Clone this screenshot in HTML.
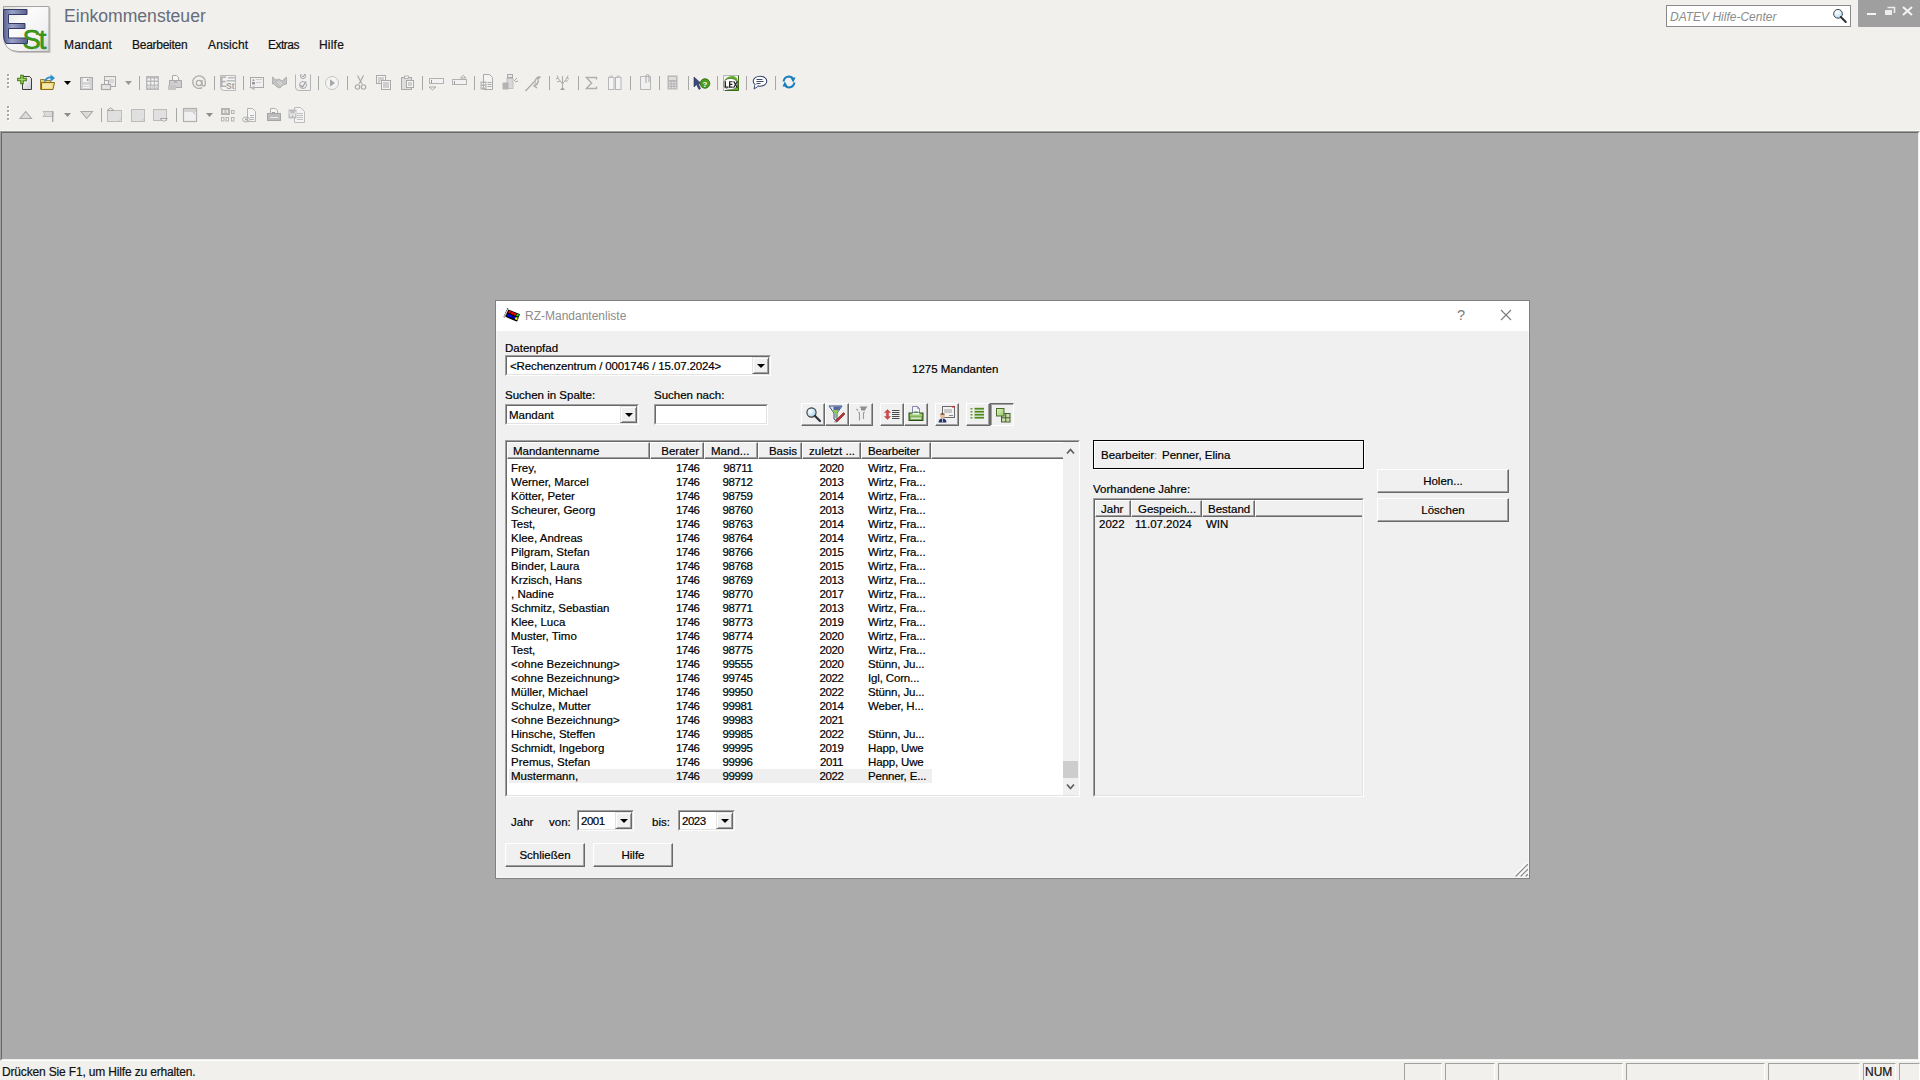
<!DOCTYPE html>
<html><head><meta charset="utf-8">
<style>
*{margin:0;padding:0;box-sizing:border-box}
html,body{width:1920px;height:1080px;overflow:hidden;background:#f1f0ec;font-family:"Liberation Sans",sans-serif;color:#000}
.a{position:absolute}
.t{position:absolute;font-size:11.5px;line-height:14px;white-space:pre;-webkit-text-stroke:0.2px currentColor}
.ns{-webkit-text-stroke:0}
.r{text-align:right}
.c{text-align:center}
.sep{position:absolute;width:1px;height:14px;background:#a7a7a7}
.grip{position:absolute;width:2px;height:2px;background:#a9a9a9;box-shadow:1px 1px 0 #fff}
.btn{position:absolute;background:#f0f0f0;border-top:1px solid #fff;border-left:1px solid #fff;border-right:1px solid #696969;border-bottom:1px solid #696969;box-shadow:inset -1px -1px 0 #a0a0a0}
.sunk{position:absolute;border-top:1px solid #a0a0a0;border-left:1px solid #a0a0a0;border-right:1px solid #fff;border-bottom:1px solid #fff}
.sunk>.in{position:absolute;left:0;top:0;right:0;bottom:0;border-top:1px solid #696969;border-left:1px solid #696969;border-right:1px solid #e3e3e3;border-bottom:1px solid #e3e3e3;background:#fff}
.hd{position:absolute;top:0;height:17px;background:#f0f0f0;border-top:1px solid #fff;border-left:1px solid #fff;border-right:1px solid #696969;border-bottom:1px solid #696969;box-shadow:inset -1px -1px 0 #a0a0a0}
.ddb{position:absolute;background:#f0f0f0;border-top:1px solid #e3e3e3;border-left:1px solid #e3e3e3;border-right:1px solid #696969;border-bottom:1px solid #696969;box-shadow:inset 1px 1px 0 #fff,inset -1px -1px 0 #a0a0a0}
.ddb:after{content:"";position:absolute;left:4px;top:6px;border-left:4px solid transparent;border-right:4px solid transparent;border-top:4px solid #000}
.ico{position:absolute;width:16px;height:16px}
</style></head><body>

<!-- ===== APP HEADER ===== -->
<div id="hdr">
 <!-- logo -->
 <svg class="a" style="left:0;top:0" width="56" height="56" viewBox="0 0 56 56">
  <defs>
   <linearGradient id="lg1" x1="0" y1="0" x2="1" y2="1"><stop offset="0" stop-color="#dcdcdc"/><stop offset=".35" stop-color="#fbfbfb"/><stop offset=".7" stop-color="#f2f2f4"/><stop offset="1" stop-color="#d4d4d8"/></linearGradient>
   <linearGradient id="lg2" x1="0" y1="0" x2="1" y2="0"><stop offset="0" stop-color="#5a6090"/><stop offset=".35" stop-color="#9aa2c8"/><stop offset=".7" stop-color="#7880a8"/><stop offset="1" stop-color="#5a6088"/></linearGradient>
  </defs>
  <path d="M4 52.5H49.5V7H3.5V35Q4 52 18 52.5" fill="#707070" opacity=".35" transform="translate(1,0.5)"/>
  <path d="M3.5 6.5H49V51.5H18Q3.5 51 3.5 36Z" fill="url(#lg1)" stroke="#a4a4a4" stroke-width="1"/>
  <path d="M3.5 9.5H27V14.5H8.5V23.5H25V28.5H8.5V38H27.5V43.5H6Q3.5 40 3.5 35Z" fill="url(#lg2)" stroke="#343a68" stroke-width="1"/>
  <text x="22.5" y="49" font-family="Liberation Sans" font-size="27.5" fill="#3c9c14" stroke="#2a7a08" stroke-width=".5" letter-spacing="-2.2">St</text>
 </svg>
 <div class="t ns" style="left:64px;top:5px;font-size:17.6px;line-height:22px;color:#666c7a">Einkommensteuer</div>
 <div class="t" style="left:64px;top:38px;font-size:12px;letter-spacing:0.19px;color:#111">Mandant</div>
 <div class="t" style="left:132px;top:38px;font-size:12px;letter-spacing:-0.27px;color:#111">Bearbeiten</div>
 <div class="t" style="left:208px;top:38px;font-size:12px;letter-spacing:0.13px;color:#111">Ansicht</div>
 <div class="t" style="left:268px;top:38px;font-size:12px;letter-spacing:-0.5px;color:#111">Extras</div>
 <div class="t" style="left:319px;top:38px;font-size:12px;letter-spacing:0.2px;color:#111">Hilfe</div>

 <!-- search -->
 <div class="a" style="left:1666px;top:5px;width:185px;height:22px;background:#fff;border:1px solid #8a8a8a"></div>
 <div class="t ns" style="left:1670px;top:10px;font-size:12px;font-style:italic;color:#8c8c8c">DATEV Hilfe-Center</div>
 <svg class="a" style="left:1832px;top:8px" width="17" height="17" viewBox="0 0 17 17">
  <defs><radialGradient id="smg" cx=".4" cy=".35" r=".7"><stop offset="0" stop-color="#fff"/><stop offset="1" stop-color="#b4dcf0"/></radialGradient></defs>
  <circle cx="6" cy="5.8" r="4.4" fill="url(#smg)" stroke="#3c4650" stroke-width="1"/>
  <path d="M8.8 9L13.8 14" stroke="#2e3338" stroke-width="2" stroke-linecap="round"/>
 </svg>
 <!-- window controls -->
 <div class="a" style="left:1858px;top:0;width:62px;height:27px;background:#9e9f9e;border-bottom-left-radius:1px"></div>
 <div class="a" style="left:1867px;top:13px;width:9px;height:2px;background:#f4f4f4"></div>
 <svg class="a" style="left:1884px;top:6px" width="12" height="10" viewBox="0 0 12 10">
  <path d="M3.5 1.5H10.5V7" fill="none" stroke="#ececec" stroke-width="1.6"/>
  <rect x="1" y="4" width="7" height="5" fill="#ececec"/>
 </svg>
 <svg class="a" style="left:1902px;top:6px" width="11" height="10" viewBox="0 0 11 10">
  <path d="M1 1L10 9M10 1L1 9" stroke="#f4f4f4" stroke-width="2"/>
 </svg>
</div>

<!-- ===== TOOLBARS ===== -->
<!--TB-START-->
<div class="grip" style="left:7px;top:74px"></div>
<div class="grip" style="left:7px;top:78px"></div>
<div class="grip" style="left:7px;top:82px"></div>
<div class="grip" style="left:7px;top:86px"></div>
<div class="grip" style="left:7px;top:106px"></div>
<div class="grip" style="left:7px;top:110px"></div>
<div class="grip" style="left:7px;top:114px"></div>
<div class="grip" style="left:7px;top:118px"></div>
<div class="sep" style="left:139px;top:76px"></div>
<div class="sep" style="left:214px;top:76px"></div>
<div class="sep" style="left:243px;top:76px"></div>
<div class="sep" style="left:318px;top:76px"></div>
<div class="sep" style="left:347px;top:76px"></div>
<div class="sep" style="left:422px;top:76px"></div>
<div class="sep" style="left:474px;top:76px"></div>
<div class="sep" style="left:549px;top:76px"></div>
<div class="sep" style="left:578px;top:76px"></div>
<div class="sep" style="left:630px;top:76px"></div>
<div class="sep" style="left:659px;top:76px"></div>
<div class="sep" style="left:688px;top:76px"></div>
<div class="sep" style="left:717px;top:76px"></div>
<div class="sep" style="left:746px;top:76px"></div>
<div class="sep" style="left:775px;top:76px"></div>
<div class="sep" style="left:101px;top:108px"></div>
<div class="sep" style="left:176px;top:108px"></div>
<svg class="a" style="left:17px;top:74px" width="17" height="17" viewBox="0 0 17 17"><defs><linearGradient id="nd" x1="0" y1="0" x2="1" y2="1"><stop offset="0" stop-color="#fff"/><stop offset="1" stop-color="#c8c8d4"/></linearGradient></defs>
<path d="M5.5 2.5H12.5L14.5 4.5V15.5H5.5Z" fill="url(#nd)" stroke="#3c3c3c" stroke-width="1"/>
<path d="M3.8 1.2h2.4v3.1h3.1v2.4h-3.1v3.1h-2.4v-3.1h-3.1v-2.4h3.1z" fill="#a6d86a" stroke="#3f7a10" stroke-width="1.1"/></svg>
<svg class="a" style="left:39px;top:74px" width="18" height="17" viewBox="0 0 18 17"><path d="M1.5 5.5h4l1 1h5v9h-10z" fill="#f0d070" stroke="#9a7a30"/>
<path d="M2.5 8.5h13l-1.5 7h-11.5z" fill="#f2dc80" stroke="#8a6a20"/><rect x="4" y="10" width="8.5" height="4" fill="#f4e8b0"/>
<path d="M5.5 7.5Q8 2.5 12.5 3.5" stroke="#2a8fd0" stroke-width="1.8" fill="none"/><path d="M11.5 0.5L16 4L11.5 8z" fill="#2a8fd0"/></svg>
<svg class="a" style="left:64px;top:81px" width="7" height="4" viewBox="0 0 7 4"><path d="M0 0H7L3.5 4z" fill="#000"/></svg>
<svg class="a" style="left:79px;top:76px" width="15" height="15" viewBox="0 0 15 15"><rect x="1.5" y="1.5" width="12" height="12" fill="#d4d4d4" stroke="#a9a9a9"/>
<rect x="4" y="2" width="6" height="4" fill="#f4f4f4"/><rect x="8" y="3" width="1.5" height="2" fill="#9a9a9a"/>
<rect x="4" y="9" width="7" height="1" fill="#f4f4f4"/><rect x="4" y="11" width="7" height="1" fill="#f4f4f4"/></svg>
<svg class="a" style="left:100px;top:75px" width="17" height="16" viewBox="0 0 17 16"><rect x="4.5" y="1.5" width="11" height="10" fill="#ececec" stroke="#a9a9a9"/>
<rect x="9" y="4" width="5" height="4" fill="#d8d8d8"/>
<rect x="4.5" y="5.5" width="4" height="5" fill="#f4f4f4" stroke="#a9a9a9"/>
<rect x="1.5" y="9.5" width="9" height="5" fill="#e4e4e4" stroke="#a9a9a9" stroke-width="1.2"/></svg>
<svg class="a" style="left:125px;top:81px" width="7" height="4" viewBox="0 0 7 4"><path d="M0 0H7L3.5 4z" fill="#9a9a9a"/></svg>
<svg class="a" style="left:145px;top:75px" width="15" height="16" viewBox="0 0 15 16"><rect x="1" y="1" width="13" height="14" fill="#bababa"/>
<g fill="#f6f6f6"><rect x="2.5" y="3.5" width="2.5" height="2"/><rect x="6.3" y="3.5" width="2.5" height="2"/><rect x="10" y="3.5" width="2.5" height="2"/>
<rect x="2.5" y="7" width="2.5" height="2.5"/><rect x="6.3" y="7" width="2.5" height="2.5"/><rect x="10" y="7" width="2.5" height="2.5"/></g>
<g fill="none" stroke="#f0f0f0" stroke-width=".8"><circle cx="3.8" cy="12" r="1.1"/><circle cx="7.5" cy="12" r="1.1"/><circle cx="11.2" cy="12" r="1.1"/></g></svg>
<svg class="a" style="left:167px;top:74px" width="17" height="17" viewBox="0 0 17 17"><path d="M5.5 1.5h4l2 2v5h-6z" fill="#f6f6f6" stroke="#a9a9a9"/>
<rect x="2.5" y="6.5" width="12" height="7" fill="#cfcfcf" stroke="#a9a9a9"/>
<rect x="1" y="11" width="8" height="5" fill="#c6c6c6"/><rect x="7" y="7.5" width="3" height="1" fill="#9a9a9a"/></svg>
<svg class="a" style="left:191px;top:75px" width="16" height="16" viewBox="0 0 16 16"><path d="M11.2 12.6A6.3 6.3 0 1 1 14.3 8V9Q14.3 11 12.6 11Q11 11 11 9V5" fill="none" stroke="#acacac" stroke-width="1.3"/>
<circle cx="8" cy="8" r="2.7" fill="none" stroke="#acacac" stroke-width="1.3"/></svg>
<svg class="a" style="left:219px;top:74px" width="18" height="18" viewBox="0 0 18 18"><path d="M1.5 1.5H16.5V16.5H5Q1.5 16.5 1.5 13Z" fill="#f2f2f2" stroke="#b8b8b8"/>
<path d="M2 2.5h5v1.6h-3.5v2.7h3v1.6h-3v3h4v1.6H2z" fill="#b0b0b0"/>
<rect x="9" y="3" width="7" height="1.5" fill="#bdbdbd"/><rect x="7.5" y="6" width="8.5" height="1.5" fill="#bdbdbd"/>
<text x="7" y="15.2" font-family="Liberation Sans" font-size="8.5" font-weight="bold" fill="#a0a0a0">St</text></svg>
<svg class="a" style="left:248px;top:76px" width="17" height="15" viewBox="0 0 17 15"><rect x="2.5" y="1.5" width="13" height="10" fill="#f0f0f0" stroke="#a9a9a9"/>
<circle cx="5.5" cy="4.2" r="1" fill="#9a9a9a"/><rect x="4" y="6" width="3" height="2.5" fill="#9a9a9a"/>
<rect x="8" y="3" width="6" height="1" fill="#cfcfcf"/><rect x="8" y="6" width="5" height="1" fill="#cfcfcf"/>
<path d="M0.5 11.5h3l3-2v5l-3-2" fill="#b8b8b8"/></svg>
<svg class="a" style="left:272px;top:76px" width="15" height="13" viewBox="0 0 15 13"><path d="M0.5 1L4 4L7 3L10 5L11 4L14.5 1V8L11 9L8 12L5 11L2 8L0.5 8z" fill="#c2c2c2" stroke="#a8a8a8" stroke-width=".8"/>
<path d="M5 6L9 9M7 5L10 8" stroke="#e8e8e8" stroke-width=".8"/></svg>
<svg class="a" style="left:294px;top:74px" width="18" height="18" viewBox="0 0 18 18"><path d="M1.5 0.5V13Q1.5 16.5 5 16.5H16.5V0.5" fill="#f0f0f0" stroke="#b4b4b4"/>
<circle cx="9" cy="2" r="2.6" fill="none" stroke="#a8a8a8"/><path d="M7.5 1.5L9 3L11 0" stroke="#a0a0a0" fill="none"/>
<circle cx="9" cy="11" r="3.5" fill="none" stroke="#a8a8a8"/><path d="M6.5 11L8.5 13L12 7.5" stroke="#a0a0a0" stroke-width="1.2" fill="none"/></svg>
<svg class="a" style="left:324px;top:75px" width="16" height="16" viewBox="0 0 16 16"><circle cx="8" cy="8" r="6.5" fill="#f4f4f4" stroke="#c4c4c4"/>
<path d="M6 4.2V11.8L11 8z" fill="#a8a8a8"/></svg>
<svg class="a" style="left:354px;top:74px" width="13" height="17" viewBox="0 0 13 17"><path d="M3.5 1.5L8 10M9.5 1.5L5 10" stroke="#a6a6a6" stroke-width="1.1" fill="none"/>
<circle cx="3.5" cy="13" r="2.2" fill="none" stroke="#a8a8a8" stroke-width="1.1"/><circle cx="9.5" cy="13" r="2.2" fill="none" stroke="#a8a8a8" stroke-width="1.1"/></svg>
<svg class="a" style="left:375px;top:74px" width="17" height="17" viewBox="0 0 17 17"><rect x="1.5" y="1.5" width="9" height="8" fill="#f4f4f4" stroke="#a9a9a9"/>
<g fill="#a9a9a9"><rect x="3" y="3.5" width="6" height="1"/><rect x="3" y="5.5" width="6" height="1"/><rect x="3" y="7.5" width="2" height="1"/></g>
<rect x="6.5" y="6.5" width="9" height="9" fill="#f4f4f4" stroke="#a9a9a9"/>
<g fill="#a9a9a9"><rect x="8" y="8.5" width="6" height="1"/><rect x="8" y="10.5" width="6" height="1"/><rect x="8" y="12.5" width="6" height="1"/></g></svg>
<svg class="a" style="left:400px;top:75px" width="16" height="16" viewBox="0 0 16 16"><rect x="1.5" y="2.5" width="10" height="12" fill="#dedede" stroke="#a9a9a9"/>
<rect x="4.5" y="1" width="4" height="2.5" fill="#f2f2f2" stroke="#a9a9a9" stroke-width=".8"/>
<rect x="6.5" y="5.5" width="7" height="7" fill="#f4f4f4" stroke="#a9a9a9"/>
<g fill="#a9a9a9"><rect x="8" y="7.5" width="4" height="1"/><rect x="8" y="9.5" width="4" height="1"/></g></svg>
<svg class="a" style="left:428px;top:77px" width="17" height="15" viewBox="0 0 17 15"><rect x="1.5" y="1.5" width="14" height="5" fill="#f2f2f2" stroke="#b2b2b2"/><rect x="3" y="3" width="1" height="3" fill="#9a9a9a"/>
<path d="M1 10H8L4.5 13z" fill="none" stroke="#aaa" stroke-width="1"/></svg>
<svg class="a" style="left:451px;top:74px" width="17" height="13" viewBox="0 0 17 13"><path d="M9.5 4H15L12.25 1.3z" fill="none" stroke="#aaa"/>
<rect x="1.5" y="5.5" width="14" height="5" fill="#f2f2f2" stroke="#b2b2b2"/><rect x="3" y="7" width="1" height="3" fill="#9a9a9a"/></svg>
<svg class="a" style="left:480px;top:74px" width="15" height="17" viewBox="0 0 15 17"><path d="M3.5 0.5h6l3 3v12h-9z" fill="#f4f4f4" stroke="#a9a9a9"/>
<rect x="0.5" y="7.5" width="6" height="8" fill="#b4b4b4"/><g fill="#f0f0f0"><rect x="1.5" y="9" width="1.5" height="1.5"/><rect x="4" y="9" width="1.5" height="1.5"/><rect x="1.5" y="12" width="1.5" height="1.5"/><rect x="4" y="12" width="1.5" height="1.5"/></g>
<g fill="#a9a9a9"><rect x="7.5" y="8" width="4" height="1"/><rect x="7.5" y="10" width="4" height="1"/><rect x="7.5" y="12" width="4" height="1"/></g></svg>
<svg class="a" style="left:502px;top:74px" width="17" height="17" viewBox="0 0 17 17"><rect x="5.5" y="0.5" width="5" height="3" fill="#e8e8e8" stroke="#a9a9a9"/>
<rect x="5" y="4.5" width="6" height="10" fill="#d8d8d8" stroke="#b8b8b8" stroke-width=".8"/>
<rect x="0.5" y="8.5" width="6" height="7" fill="#b4b4b4"/>
<path d="M12 7l3-3M13 8l3-1" stroke="#a9a9a9" stroke-width="1"/></svg>
<svg class="a" style="left:525px;top:75px" width="17" height="17" viewBox="0 0 17 17"><path d="M0.5 16L10 6Q12 1 15 2L13 4Q14 9 9 11L12 13" stroke="#a6a6a6" stroke-width="1.2" fill="none"/>
<path d="M10 6Q11 9 9 11" stroke="#b8b8b8" fill="none"/></svg>
<svg class="a" style="left:554px;top:74px" width="17" height="17" viewBox="0 0 17 17"><path d="M8.5 15V8M8.5 10L4 4M8.5 10L13 4M8.5 8L8.5 2M4 4L2 5M4 4L3 1.5M13 4L15 5M13 4L14 1.5M6 7L3 8M11 7L14 7" stroke="#ababab" stroke-width="1" fill="none"/>
<path d="M6 16h5l-1.5-2h-2z" fill="#a4a4a4"/></svg>
<svg class="a" style="left:585px;top:76px" width="13" height="14" viewBox="0 0 13 14"><path d="M11.5 3.5V1.5H1.5L6.5 7L1.5 12.5H11.5V10.5" fill="none" stroke="#aeaeae" stroke-width="1.4"/><path d="M3.5 2.5L8 7L3.5 11.5" fill="none" stroke="#e0e0e0" stroke-width=".6"/></svg>
<svg class="a" style="left:607px;top:75px" width="16" height="16" viewBox="0 0 16 16"><rect x="1.5" y="2.5" width="5.5" height="12" fill="#f4f4f4" stroke="#b6b6b6"/>
<rect x="8.5" y="2.5" width="5.5" height="12" fill="#f4f4f4" stroke="#b6b6b6"/>
<rect x="2.5" y="0.5" width="3.5" height="2" fill="#c8c8c8"/><rect x="9.5" y="0.5" width="3.5" height="2" fill="#c8c8c8"/></svg>
<svg class="a" style="left:639px;top:74px" width="13" height="17" viewBox="0 0 13 17"><path d="M1.5 2.5H11.5V15.5H1.5Z" fill="#f0f0f0" stroke="#b6b6b6"/>
<path d="M7 9V2Q7 0.5 8.5 0.5Q10 0.5 10 2V8" stroke="#a8a8a8" stroke-width="1" fill="none"/></svg>
<svg class="a" style="left:667px;top:75px" width="12" height="16" viewBox="0 0 12 16"><rect x="0.5" y="0.5" width="10" height="14" fill="#b8b8b8"/><rect x="2" y="2" width="7" height="3" fill="#dedede"/>
<g fill="#e6e6e6"><rect x="2" y="7" width="1.5" height="1.2"/><rect x="4.8" y="7" width="1.5" height="1.2"/><rect x="7.5" y="7" width="1.5" height="1.2"/>
<rect x="2" y="9.5" width="1.5" height="1.2"/><rect x="4.8" y="9.5" width="1.5" height="1.2"/><rect x="7.5" y="9.5" width="1.5" height="1.2"/>
<rect x="2" y="12" width="1.5" height="1.2"/><rect x="4.8" y="12" width="1.5" height="1.2"/><rect x="7.5" y="12" width="1.5" height="1.2"/></g></svg>
<svg class="a" style="left:693px;top:76px" width="18" height="15" viewBox="0 0 18 15"><path d="M1 1L1 11L3.5 8.5L6 13.5L7.5 12.5L5.3 7.8H8.5Z" fill="#3c477a" stroke="#2a3360" stroke-width=".6"/>
<circle cx="12" cy="7.5" r="4.8" fill="#4d9a22" stroke="#2e6a10" stroke-width=".8"/>
<text x="12" y="10.5" text-anchor="middle" font-family="Liberation Sans" font-size="8" font-weight="bold" fill="#fff">?</text></svg>
<svg class="a" style="left:722px;top:74px" width="18" height="18" viewBox="0 0 18 18"><rect x="1.5" y="1.5" width="15" height="15" fill="#f2f2f2" stroke="#b8b8b8" stroke-width="1"/><path d="M16.5 1.5V16.5H3" stroke="#3a6a18" stroke-width="1" fill="none"/>
<path d="M2.5 6Q6 1.8 11 2Q16 3 16 9V16H9" fill="#62b028"/>
<ellipse cx="8.5" cy="10" rx="7.2" ry="5.6" fill="#fff" stroke="#3a3a3a" stroke-width=".5"/>
<path d="M2.6 7.2h1.4v5.4h2.6v1.2H2.6z M7 7.2h3.6v1.1H8.3v1.5h2.1v1.1H8.3v1.6h2.4v1.2H7z M11 7.2h1.5l1.1 2 1.1-2h1.3l-1.7 3.2 1.8 3.4h-1.5l-1.1-2.2-1.2 2.2h-1.4l1.9-3.3z" fill="#222"/></svg>
<svg class="a" style="left:752px;top:75px" width="16" height="15" viewBox="0 0 16 15"><ellipse cx="8" cy="6.2" rx="6.8" ry="5" fill="#fff" stroke="#3b4a72" stroke-width="1.1"/>
<path d="M3 10L2 14L6.5 11" fill="#fff" stroke="#3b4a72" stroke-width="1"/><path d="M3.2 10.2L5.5 10.8" stroke="#fff" stroke-width="1.4"/>
<g fill="#3b4a72"><rect x="4.5" y="4" width="6" height="1"/><rect x="4.5" y="6" width="7" height="1"/><rect x="4.5" y="8" width="4" height="1"/></g></svg>
<svg class="a" style="left:782px;top:75px" width="14" height="14" viewBox="0 0 14 14"><path d="M1.5 6.5Q2.5 1.8 7 1.6Q9.3 1.6 10.5 3" stroke="#1a7fc0" stroke-width="2" fill="none"/><path d="M8.2 2.2L13.5 2.4L11.2 7.6z" fill="#1a7fc0"/>
<path d="M12.5 7.5Q11.5 12.2 7 12.4Q4.7 12.4 3.5 11" stroke="#1a7fc0" stroke-width="2" fill="none"/><path d="M5.8 11.8L0.5 11.6L2.8 6.4z" fill="#1a7fc0"/></svg>
<svg class="a" style="left:19px;top:110px" width="14" height="10" viewBox="0 0 14 10"><path d="M1 8.5H12.5L6.75 1.5z" fill="#dcdcdc" stroke="#a8a8a8" stroke-width="1.1"/></svg>
<svg class="a" style="left:42px;top:110px" width="14" height="14" viewBox="0 0 14 14"><path d="M1 1.5H10L11 2.5V6.5H1L3 4z" fill="#dadada" stroke="#b0b0b0" stroke-width=".8"/><rect x="10" y="1" width="1.4" height="11" fill="#a8a8a8"/></svg>
<svg class="a" style="left:64px;top:113px" width="7" height="4" viewBox="0 0 7 4"><path d="M0 0H7L3.5 4z" fill="#8e8e8e"/></svg>
<svg class="a" style="left:80px;top:110px" width="14" height="10" viewBox="0 0 14 10"><path d="M1 1.5H12.5L6.75 8.5z" fill="#dcdcdc" stroke="#a8a8a8" stroke-width="1.1"/></svg>
<svg class="a" style="left:106px;top:107px" width="17" height="16" viewBox="0 0 17 16"><rect x="1.5" y="3.5" width="14" height="11" fill="#e0e0e0" stroke="#bcbcbc"/><path d="M1 3.5H8L4.5 0.8z" fill="#e6e6e6" stroke="#a8a8a8"/><path d="M12 14.5L15.5 11" stroke="#c8c8c8"/></svg>
<svg class="a" style="left:130px;top:108px" width="16" height="15" viewBox="0 0 16 15"><rect x="1.5" y="1.5" width="13" height="12" fill="#e0e0e0" stroke="#bcbcbc"/><path d="M11 13.5L14.5 10" stroke="#c8c8c8"/></svg>
<svg class="a" style="left:152px;top:108px" width="18" height="15" viewBox="0 0 18 15"><rect x="1.5" y="1.5" width="13" height="11" fill="#e0e0e0" stroke="#bcbcbc"/><path d="M8 10.5H15.5L11.75 13.5z" fill="#f0f0f0" stroke="#a8a8a8"/></svg>
<svg class="a" style="left:182px;top:107px" width="16" height="16" viewBox="0 0 16 16"><rect x="1.5" y="1.5" width="13" height="13" fill="#f0f0f0" stroke="#b0b0b0" stroke-width="1.2"/><rect x="2" y="2" width="12" height="3" fill="#d2d2d2"/><path d="M11 5L13 7" stroke="#b0b0b0"/></svg>
<svg class="a" style="left:206px;top:113px" width="7" height="4" viewBox="0 0 7 4"><path d="M0 0H7L3.5 4z" fill="#8e8e8e"/></svg>
<svg class="a" style="left:220px;top:107px" width="16" height="16" viewBox="0 0 16 16"><g fill="none" stroke="#b4b4b4"><rect x="1.5" y="1.5" width="8" height="6"/><rect x="2.5" y="2.5" width="2.5" height="4"/><rect x="6" y="2.5" width="2.5" height="4"/><rect x="11.5" y="3.5" width="2.5" height="3"/>
<rect x="1.5" y="10.5" width="2.5" height="3.5"/><rect x="6" y="10.5" width="2.5" height="3.5"/><rect x="11.5" y="10.5" width="2.5" height="3.5"/></g></svg>
<svg class="a" style="left:242px;top:107px" width="16" height="16" viewBox="0 0 16 16"><path d="M5.5 1.5h5l3 3v10h-8z" fill="#f4f4f4" stroke="#b4b4b4"/><g fill="#b4b4b4"><rect x="8" y="8" width="4" height="1"/><rect x="8" y="10" width="4" height="1"/><rect x="8" y="12" width="4" height="1"/></g>
<ellipse cx="4" cy="12.5" rx="3.5" ry="2.5" fill="none" stroke="#b0b0b0"/><circle cx="4" cy="12.5" r="1" fill="#a0a0a0"/></svg>
<svg class="a" style="left:266px;top:107px" width="16" height="16" viewBox="0 0 16 16"><path d="M4.5 1.5h5l2 2v4h-7z" fill="#f4f4f4" stroke="#b0b0b0"/><rect x="1.5" y="6.5" width="13" height="7" fill="#bdbdbd" stroke="#a6a6a6"/><rect x="4" y="10" width="8" height="1" fill="#eaeaea"/><rect x="6" y="5" width="3" height="1" fill="#a0a0a0"/></svg>
<svg class="a" style="left:288px;top:106px" width="18" height="18" viewBox="0 0 18 18"><path d="M6.5 1.5h6l4 4v11h-10z" fill="#f4f4f4" stroke="#bcbcbc"/><g fill="#c0c0c0"><rect x="9" y="7" width="6" height="1"/><rect x="9" y="9" width="6" height="1"/><rect x="9" y="11" width="6" height="1"/><rect x="9" y="13" width="6" height="1"/></g>
<rect x="0.5" y="3.5" width="8" height="9" fill="#bdbdbd"/><path d="M1.6 5.5L2.8 10.5L4.5 7L6.2 10.5L7.4 5.5" fill="none" stroke="#f4f4f4" stroke-width="1"/></svg>
<!--TB-END-->

<!-- ===== MDI CLIENT ===== -->
<div class="a" style="left:0;top:130px;width:1920px;height:1px;background:#f8f7f4"></div>
<div class="a" style="left:0;top:131px;width:1920px;height:930px;background:#ababab;border-top:1px solid #a0a0a0;border-left:1px solid #a0a0a0;border-right:1px solid #fff;border-bottom:1px solid #fff">
 <div class="a" style="left:0;top:0;right:0;bottom:0;border-top:1px solid #696969;border-left:1px solid #696969;border-right:1px solid #efefef;border-bottom:1px solid #efefef"></div>
</div>

<!-- ===== STATUS BAR ===== -->
<div class="t" style="left:2px;top:1065px;font-size:12px;letter-spacing:-0.16px;color:#111">Drücken Sie F1, um Hilfe zu erhalten.</div>
<div id="sb">
<div class="a" style="left:1404px;top:1063px;width:38px;height:17px;border-top:1px solid #a0a0a0;border-left:1px solid #a0a0a0;border-right:1px solid #fff"></div>
<div class="a" style="left:1445px;top:1063px;width:50px;height:17px;border-top:1px solid #a0a0a0;border-left:1px solid #a0a0a0;border-right:1px solid #fff"></div>
<div class="a" style="left:1498px;top:1063px;width:125px;height:17px;border-top:1px solid #a0a0a0;border-left:1px solid #a0a0a0;border-right:1px solid #fff"></div>
<div class="a" style="left:1626px;top:1063px;width:139px;height:17px;border-top:1px solid #a0a0a0;border-left:1px solid #a0a0a0;border-right:1px solid #fff"></div>
<div class="a" style="left:1768px;top:1063px;width:92px;height:17px;border-top:1px solid #a0a0a0;border-left:1px solid #a0a0a0;border-right:1px solid #fff"></div>
<div class="a" style="left:1863px;top:1063px;width:33px;height:17px;border-top:1px solid #a0a0a0;border-left:1px solid #a0a0a0;border-right:1px solid #fff"></div>
<div class="a" style="left:1899px;top:1063px;width:21px;height:17px;border-top:1px solid #a0a0a0;border-left:1px solid #a0a0a0;border-right:1px solid #fff"></div>
<div class="t" style="left:1865px;top:1065px;font-size:12px;color:#111">NUM</div>
</div>

<!-- ===== DIALOG ===== -->
<div id="dlg" class="a" style="left:495px;top:300px;width:1035px;height:579px;background:#f0f0f0;border:1px solid #808080;box-shadow:inset 1px 1px 0 #f6f6f6,inset -1px -1px 0 #f8f8f8"></div>
<!-- dialog title -->
<div class="a" style="left:496px;top:301px;width:1033px;height:30px;background:#fff"></div>
<svg class="a" style="left:503px;top:306px" width="18" height="18" viewBox="0 0 18 18">
<g transform="rotate(22 9 9)">
<path d="M3.5 5.2h12.2l.8 1-.8 1 .8 1-.8 1 .8 1-.8 1 .8 1-.8 1H3.5z" fill="#000"/>
<rect x="4.6" y="6" width="2.2" height="2.3" fill="#f00"/><rect x="7.4" y="6" width="2.4" height="2.3" fill="#f00"/><rect x="10.4" y="6" width="2.4" height="2.3" fill="#f00"/><rect x="13.2" y="6" width="2.2" height="2.3" fill="#0d0"/>
<rect x="4.6" y="9.4" width="2.2" height="2.4" fill="#00f"/><rect x="7.4" y="9.4" width="2.4" height="2.4" fill="#00f"/><rect x="10.4" y="9.4" width="2.4" height="2.4" fill="#00f"/><rect x="13.2" y="9.4" width="2.2" height="2.4" fill="#ff0"/>
<path d="M2.5 4.5v9.5" stroke="#000" stroke-width="1.4" stroke-dasharray="1.2 1"/><path d="M2.5 5.5v9" stroke="#fff" stroke-width="1" stroke-dasharray="1 1.2" opacity=".8"/>
</g></svg>
<div class="t ns" style="left:525px;top:309px;font-size:12px;color:#8c8c8c">RZ-Mandantenliste</div>
<div class="t ns" style="left:1457px;top:308px;font-size:14.5px;color:#7c7c7c">?</div>
<svg class="a" style="left:1500px;top:309px" width="12" height="12" viewBox="0 0 12 12"><path d="M1 1L11 11M11 1L1 11" stroke="#7a7a7a" stroke-width="1.1"/></svg>
<!-- controls -->
<div class="t" style="left:505px;top:341px">Datenpfad</div>
<div class="sunk" style="left:505px;top:355px;width:266px;height:21px"><div class="in"></div></div><div class="ddb" style="left:752px;top:357px;width:17px;height:17px"></div><div class="t" style="left:510px;top:359px;letter-spacing:-0.13px">&lt;Rechenzentrum / 0001746 / 15.07.2024&gt;</div>
<div class="t" style="left:912px;top:362px">1275 Mandanten</div>
<div class="t" style="left:505px;top:388px">Suchen in Spalte:</div>
<div class="sunk" style="left:505px;top:404px;width:134px;height:21px"><div class="in"></div></div><div class="ddb" style="left:620px;top:406px;width:17px;height:17px"></div><div class="t" style="left:509px;top:408px">Mandant</div>
<div class="t" style="left:654px;top:388px">Suchen nach:</div>
<div class="sunk" style="left:654px;top:404px;width:114px;height:21px"><div class="in"></div></div>
<div class="btn" style="left:801px;top:403px;width:24px;height:23px"></div>
<div class="btn" style="left:825px;top:403px;width:24px;height:23px"></div>
<div class="btn" style="left:849px;top:403px;width:24px;height:23px"></div>
<div class="btn" style="left:880px;top:403px;width:24px;height:23px"></div>
<div class="btn" style="left:904px;top:403px;width:24px;height:23px"></div>
<div class="btn" style="left:935px;top:403px;width:24px;height:23px"></div>
<div class="btn" style="left:966px;top:403px;width:24px;height:23px"></div>
<div class="a" style="left:990px;top:403px;width:24px;height:23px;background:#f0f0f0;border-top:1px solid #696969;border-left:1px solid #696969;border-right:1px solid #fff;border-bottom:1px solid #fff;box-shadow:inset 1px 1px 0 #a0a0a0"></div>
<div id="dlgicons">
<svg class="a" style="left:805px;top:406px" width="17" height="17" viewBox="0 0 17 17"><defs><radialGradient id="mg" cx=".4" cy=".4" r=".6"><stop offset="0" stop-color="#fff"/><stop offset="1" stop-color="#a8d4ee"/></radialGradient></defs>
<circle cx="6.5" cy="6.5" r="4.6" fill="url(#mg)" stroke="#3a3a3a" stroke-width="1.1"/>
<path d="M9.8 9.8L15 15" stroke="#2e3338" stroke-width="2.2" stroke-linecap="round"/></svg>
<svg class="a" style="left:828px;top:405px" width="18" height="18" viewBox="0 0 18 18"><path d="M1 1H14L9 8V16L6 14V8z" fill="#dfe8f0" stroke="#3b4d8a" stroke-width="1"/>
<path d="M5.5 1.5H13.5L10.5 5H5.5z" fill="#5566a0"/><path d="M4.5 5H10.5L8.5 9V13H7V9z" fill="#8cd040"/>
<path d="M7.5 15.5L15.5 7.5L17 9L9 17z" fill="#c03030" stroke="#801818" stroke-width=".6"/><path d="M6.5 16.8L7.5 15.5L9 17z" fill="#fff" stroke="#333" stroke-width=".5"/></svg>
<svg class="a" style="left:855px;top:405px" width="14" height="18" viewBox="0 0 14 18"><path d="M4.5 1.5H12.5L10.5 4H6.5z" fill="#8e8e8e"/><rect x="6" y="3" width="4.5" height="2.5" fill="#8e8e8e"/>
<path d="M1.5 4L3 5.5M3.5 7L4.5 8V15.5M9.5 7L8.5 8V14" stroke="#9a9a9a" stroke-width="1.1" fill="none"/></svg>
<svg class="a" style="left:884px;top:409px" width="16" height="12" viewBox="0 0 16 12"><path d="M3.5 0.5L6.5 3.5H4.6V7.5H6.5L3.5 10.5L0.5 7.5H2.4V3.5H0.5z" fill="#d04848" stroke="#b03030" stroke-width=".4"/>
<g fill="#4a4a4a"><rect x="8" y="1" width="7.5" height="1"/><rect x="8" y="3" width="7.5" height="1"/><rect x="8" y="5" width="7.5" height="1"/><rect x="8" y="7" width="7.5" height="1"/><rect x="8" y="9" width="7.5" height="1"/></g></svg>
<svg class="a" style="left:908px;top:406px" width="17" height="16" viewBox="0 0 17 16">
<path d="M4.5 0.5H9.5L11.5 2.5V8.5H4.5z" fill="#f4f4fc" stroke="#7a7aa0" stroke-width=".9"/><path d="M9.5 0.5V2.5H11.5" fill="none" stroke="#7a7aa0" stroke-width=".7"/>
<rect x="6" y="5.5" width="4" height="1" fill="#30a020"/>
<rect x="1" y="7" width="14" height="7.5" fill="#78aa50" stroke="#2d4a1a" stroke-width="1"/><rect x="2" y="7.8" width="12" height="2.5" fill="#9acc70"/>
<rect x="4.5" y="7" width="7" height="1.5" fill="#f4f4fc"/>
<rect x="3" y="11.5" width="10" height="1.4" fill="#e8ece8"/></svg>
<svg class="a" style="left:938px;top:406px" width="19" height="17" viewBox="0 0 19 17"><rect x="4.5" y="0.5" width="12" height="11" fill="#f2f2f2" stroke="#6a6a6a" stroke-width="1"/><rect x="14" y="0" width="3" height="1.5" fill="#c03030"/>
<rect x="6" y="3" width="8" height="4" fill="#c8c8c8"/><rect x="11" y="9" width="4" height="1" fill="#888"/>
<circle cx="4.5" cy="10" r="2.4" fill="#e8b890"/><path d="M2 9.2Q2.5 6.8 4.5 7.2Q6.8 7 7 9.2L6.5 8.5H2.5z" fill="#4a2a10"/>
<path d="M0.5 16.5Q0.8 12.5 4.5 12.5Q8.2 12.5 8.5 16.5z" fill="#223070"/><path d="M4.5 12.5V16" stroke="#fff" stroke-width=".7"/></svg>
<svg class="a" style="left:970px;top:407px" width="16" height="13" viewBox="0 0 16 13"><g fill="#6a9a30"><rect x="0.5" y="1" width="2" height="1.5"/><rect x="0.5" y="4" width="2" height="1.5"/><rect x="0.5" y="7" width="2" height="1.5"/><rect x="0.5" y="10" width="2" height="1.5"/></g>
<g fill="#4f8a20"><rect x="4.5" y="0.8" width="9.5" height="1.8"/><rect x="4.5" y="3.8" width="9.5" height="1.8"/><rect x="4.5" y="6.8" width="9.5" height="1.8"/><rect x="4.5" y="9.8" width="9.5" height="1.8"/></g></svg>
<svg class="a" style="left:995px;top:407px" width="17" height="16" viewBox="0 0 17 16"><defs><linearGradient id="tl" x1="0" y1="0" x2="1" y2="1"><stop offset="0" stop-color="#e0f4c0"/><stop offset="1" stop-color="#98c868"/></linearGradient></defs>
<rect x="6.5" y="6.5" width="8.5" height="8.5" fill="#c4e0a8" stroke="#4a5a30"/><path d="M10.75 6.5V15M6.5 10.75H15" stroke="#4a5a30"/>
<rect x="1.5" y="1.5" width="7.5" height="7.5" fill="url(#tl)" stroke="#4a6a30"/></svg>
</div>
<!-- list -->
<div class="sunk" style="left:505px;top:440px;width:575px;height:357px"><div class="in"></div></div>
<div class="hd" style="left:507px;top:442px;width:143px"></div>
<div class="hd" style="left:650px;top:442px;width:54px"></div>
<div class="hd" style="left:704px;top:442px;width:54px"></div>
<div class="hd" style="left:758px;top:442px;width:44px"></div>
<div class="hd" style="left:802px;top:442px;width:59px"></div>
<div class="hd" style="left:861px;top:442px;width:70px"></div>
<div class="hd" style="left:931px;top:442px;width:132px;border-right:0;box-shadow:inset 0 -1px 0 #a0a0a0"></div>
<div class="t" style="left:513px;top:444px">Mandantenname</div>
<div class="t r" style="left:650px;top:444px;width:49px">Berater</div>
<div class="t" style="left:711px;top:444px">Mand...</div>
<div class="t r" style="left:758px;top:444px;width:39px">Basis</div>
<div class="t" style="left:809px;top:444px">zuletzt ...</div>
<div class="t" style="left:868px;top:444px;letter-spacing:-0.15px">Bearbeiter</div>
<div class="a" style="left:1063px;top:442px;width:16px;height:353px;background:#f0f0f0"></div>
<svg class="a" style="left:1066px;top:447px" width="9" height="8" viewBox="0 0 9 8"><path d="M1 6.5L4.5 2.5L8 6.5" stroke="#606060" stroke-width="1.8" fill="none"/></svg>
<svg class="a" style="left:1066px;top:783px" width="9" height="8" viewBox="0 0 9 8"><path d="M1 1.5L4.5 5.5L8 1.5" stroke="#606060" stroke-width="1.8" fill="none"/></svg>
<div class="a" style="left:1063px;top:761px;width:15px;height:17px;background:#cdcdcd"></div>
<div class="a" style="left:509px;top:769px;width:423px;height:14px;background:#efefef"></div>
<div class="t" style="left:511px;top:461px">Frey,</div>
<div class="t r" style="left:650px;top:461px;width:49.5px;letter-spacing:-0.5px">1746</div>
<div class="t r" style="left:704px;top:461px;width:48.5px;letter-spacing:-0.4px">98711</div>
<div class="t c" style="left:802px;top:461px;width:59px;letter-spacing:-0.4px">2020</div>
<div class="t" style="left:868px;top:461px;letter-spacing:-0.15px">Wirtz, Fra...</div>
<div class="t" style="left:511px;top:475px">Werner, Marcel</div>
<div class="t r" style="left:650px;top:475px;width:49.5px;letter-spacing:-0.5px">1746</div>
<div class="t r" style="left:704px;top:475px;width:48.5px;letter-spacing:-0.4px">98712</div>
<div class="t c" style="left:802px;top:475px;width:59px;letter-spacing:-0.4px">2013</div>
<div class="t" style="left:868px;top:475px;letter-spacing:-0.15px">Wirtz, Fra...</div>
<div class="t" style="left:511px;top:489px">Kötter, Peter</div>
<div class="t r" style="left:650px;top:489px;width:49.5px;letter-spacing:-0.5px">1746</div>
<div class="t r" style="left:704px;top:489px;width:48.5px;letter-spacing:-0.4px">98759</div>
<div class="t c" style="left:802px;top:489px;width:59px;letter-spacing:-0.4px">2014</div>
<div class="t" style="left:868px;top:489px;letter-spacing:-0.15px">Wirtz, Fra...</div>
<div class="t" style="left:511px;top:503px">Scheurer, Georg</div>
<div class="t r" style="left:650px;top:503px;width:49.5px;letter-spacing:-0.5px">1746</div>
<div class="t r" style="left:704px;top:503px;width:48.5px;letter-spacing:-0.4px">98760</div>
<div class="t c" style="left:802px;top:503px;width:59px;letter-spacing:-0.4px">2013</div>
<div class="t" style="left:868px;top:503px;letter-spacing:-0.15px">Wirtz, Fra...</div>
<div class="t" style="left:511px;top:517px">Test,</div>
<div class="t r" style="left:650px;top:517px;width:49.5px;letter-spacing:-0.5px">1746</div>
<div class="t r" style="left:704px;top:517px;width:48.5px;letter-spacing:-0.4px">98763</div>
<div class="t c" style="left:802px;top:517px;width:59px;letter-spacing:-0.4px">2014</div>
<div class="t" style="left:868px;top:517px;letter-spacing:-0.15px">Wirtz, Fra...</div>
<div class="t" style="left:511px;top:531px">Klee, Andreas</div>
<div class="t r" style="left:650px;top:531px;width:49.5px;letter-spacing:-0.5px">1746</div>
<div class="t r" style="left:704px;top:531px;width:48.5px;letter-spacing:-0.4px">98764</div>
<div class="t c" style="left:802px;top:531px;width:59px;letter-spacing:-0.4px">2014</div>
<div class="t" style="left:868px;top:531px;letter-spacing:-0.15px">Wirtz, Fra...</div>
<div class="t" style="left:511px;top:545px">Pilgram, Stefan</div>
<div class="t r" style="left:650px;top:545px;width:49.5px;letter-spacing:-0.5px">1746</div>
<div class="t r" style="left:704px;top:545px;width:48.5px;letter-spacing:-0.4px">98766</div>
<div class="t c" style="left:802px;top:545px;width:59px;letter-spacing:-0.4px">2015</div>
<div class="t" style="left:868px;top:545px;letter-spacing:-0.15px">Wirtz, Fra...</div>
<div class="t" style="left:511px;top:559px">Binder, Laura</div>
<div class="t r" style="left:650px;top:559px;width:49.5px;letter-spacing:-0.5px">1746</div>
<div class="t r" style="left:704px;top:559px;width:48.5px;letter-spacing:-0.4px">98768</div>
<div class="t c" style="left:802px;top:559px;width:59px;letter-spacing:-0.4px">2015</div>
<div class="t" style="left:868px;top:559px;letter-spacing:-0.15px">Wirtz, Fra...</div>
<div class="t" style="left:511px;top:573px">Krzisch, Hans</div>
<div class="t r" style="left:650px;top:573px;width:49.5px;letter-spacing:-0.5px">1746</div>
<div class="t r" style="left:704px;top:573px;width:48.5px;letter-spacing:-0.4px">98769</div>
<div class="t c" style="left:802px;top:573px;width:59px;letter-spacing:-0.4px">2013</div>
<div class="t" style="left:868px;top:573px;letter-spacing:-0.15px">Wirtz, Fra...</div>
<div class="t" style="left:511px;top:587px">, Nadine</div>
<div class="t r" style="left:650px;top:587px;width:49.5px;letter-spacing:-0.5px">1746</div>
<div class="t r" style="left:704px;top:587px;width:48.5px;letter-spacing:-0.4px">98770</div>
<div class="t c" style="left:802px;top:587px;width:59px;letter-spacing:-0.4px">2017</div>
<div class="t" style="left:868px;top:587px;letter-spacing:-0.15px">Wirtz, Fra...</div>
<div class="t" style="left:511px;top:601px">Schmitz, Sebastian</div>
<div class="t r" style="left:650px;top:601px;width:49.5px;letter-spacing:-0.5px">1746</div>
<div class="t r" style="left:704px;top:601px;width:48.5px;letter-spacing:-0.4px">98771</div>
<div class="t c" style="left:802px;top:601px;width:59px;letter-spacing:-0.4px">2013</div>
<div class="t" style="left:868px;top:601px;letter-spacing:-0.15px">Wirtz, Fra...</div>
<div class="t" style="left:511px;top:615px">Klee, Luca</div>
<div class="t r" style="left:650px;top:615px;width:49.5px;letter-spacing:-0.5px">1746</div>
<div class="t r" style="left:704px;top:615px;width:48.5px;letter-spacing:-0.4px">98773</div>
<div class="t c" style="left:802px;top:615px;width:59px;letter-spacing:-0.4px">2019</div>
<div class="t" style="left:868px;top:615px;letter-spacing:-0.15px">Wirtz, Fra...</div>
<div class="t" style="left:511px;top:629px">Muster, Timo</div>
<div class="t r" style="left:650px;top:629px;width:49.5px;letter-spacing:-0.5px">1746</div>
<div class="t r" style="left:704px;top:629px;width:48.5px;letter-spacing:-0.4px">98774</div>
<div class="t c" style="left:802px;top:629px;width:59px;letter-spacing:-0.4px">2020</div>
<div class="t" style="left:868px;top:629px;letter-spacing:-0.15px">Wirtz, Fra...</div>
<div class="t" style="left:511px;top:643px">Test,</div>
<div class="t r" style="left:650px;top:643px;width:49.5px;letter-spacing:-0.5px">1746</div>
<div class="t r" style="left:704px;top:643px;width:48.5px;letter-spacing:-0.4px">98775</div>
<div class="t c" style="left:802px;top:643px;width:59px;letter-spacing:-0.4px">2020</div>
<div class="t" style="left:868px;top:643px;letter-spacing:-0.15px">Wirtz, Fra...</div>
<div class="t" style="left:511px;top:657px">&lt;ohne Bezeichnung&gt;</div>
<div class="t r" style="left:650px;top:657px;width:49.5px;letter-spacing:-0.5px">1746</div>
<div class="t r" style="left:704px;top:657px;width:48.5px;letter-spacing:-0.4px">99555</div>
<div class="t c" style="left:802px;top:657px;width:59px;letter-spacing:-0.4px">2020</div>
<div class="t" style="left:868px;top:657px;letter-spacing:-0.15px">Stünn, Ju...</div>
<div class="t" style="left:511px;top:671px">&lt;ohne Bezeichnung&gt;</div>
<div class="t r" style="left:650px;top:671px;width:49.5px;letter-spacing:-0.5px">1746</div>
<div class="t r" style="left:704px;top:671px;width:48.5px;letter-spacing:-0.4px">99745</div>
<div class="t c" style="left:802px;top:671px;width:59px;letter-spacing:-0.4px">2022</div>
<div class="t" style="left:868px;top:671px;letter-spacing:-0.15px">Igl, Corn...</div>
<div class="t" style="left:511px;top:685px">Müller, Michael</div>
<div class="t r" style="left:650px;top:685px;width:49.5px;letter-spacing:-0.5px">1746</div>
<div class="t r" style="left:704px;top:685px;width:48.5px;letter-spacing:-0.4px">99950</div>
<div class="t c" style="left:802px;top:685px;width:59px;letter-spacing:-0.4px">2022</div>
<div class="t" style="left:868px;top:685px;letter-spacing:-0.15px">Stünn, Ju...</div>
<div class="t" style="left:511px;top:699px">Schulze, Mutter</div>
<div class="t r" style="left:650px;top:699px;width:49.5px;letter-spacing:-0.5px">1746</div>
<div class="t r" style="left:704px;top:699px;width:48.5px;letter-spacing:-0.4px">99981</div>
<div class="t c" style="left:802px;top:699px;width:59px;letter-spacing:-0.4px">2014</div>
<div class="t" style="left:868px;top:699px;letter-spacing:-0.15px">Weber, H...</div>
<div class="t" style="left:511px;top:713px">&lt;ohne Bezeichnung&gt;</div>
<div class="t r" style="left:650px;top:713px;width:49.5px;letter-spacing:-0.5px">1746</div>
<div class="t r" style="left:704px;top:713px;width:48.5px;letter-spacing:-0.4px">99983</div>
<div class="t c" style="left:802px;top:713px;width:59px;letter-spacing:-0.4px">2021</div>
<div class="t" style="left:868px;top:713px;letter-spacing:-0.15px"></div>
<div class="t" style="left:511px;top:727px">Hinsche, Steffen</div>
<div class="t r" style="left:650px;top:727px;width:49.5px;letter-spacing:-0.5px">1746</div>
<div class="t r" style="left:704px;top:727px;width:48.5px;letter-spacing:-0.4px">99985</div>
<div class="t c" style="left:802px;top:727px;width:59px;letter-spacing:-0.4px">2022</div>
<div class="t" style="left:868px;top:727px;letter-spacing:-0.15px">Stünn, Ju...</div>
<div class="t" style="left:511px;top:741px">Schmidt, Ingeborg</div>
<div class="t r" style="left:650px;top:741px;width:49.5px;letter-spacing:-0.5px">1746</div>
<div class="t r" style="left:704px;top:741px;width:48.5px;letter-spacing:-0.4px">99995</div>
<div class="t c" style="left:802px;top:741px;width:59px;letter-spacing:-0.4px">2019</div>
<div class="t" style="left:868px;top:741px;letter-spacing:-0.15px">Happ, Uwe</div>
<div class="t" style="left:511px;top:755px">Premus, Stefan</div>
<div class="t r" style="left:650px;top:755px;width:49.5px;letter-spacing:-0.5px">1746</div>
<div class="t r" style="left:704px;top:755px;width:48.5px;letter-spacing:-0.4px">99996</div>
<div class="t c" style="left:802px;top:755px;width:59px;letter-spacing:-0.4px">2011</div>
<div class="t" style="left:868px;top:755px;letter-spacing:-0.15px">Happ, Uwe</div>
<div class="t" style="left:511px;top:769px">Mustermann,</div>
<div class="t r" style="left:650px;top:769px;width:49.5px;letter-spacing:-0.5px">1746</div>
<div class="t r" style="left:704px;top:769px;width:48.5px;letter-spacing:-0.4px">99999</div>
<div class="t c" style="left:802px;top:769px;width:59px;letter-spacing:-0.4px">2022</div>
<div class="t" style="left:868px;top:769px;letter-spacing:-0.15px">Penner, E...</div>
<!-- bottom -->
<div class="t" style="left:511px;top:815px">Jahr</div>
<div class="t" style="left:549px;top:815px">von:</div>
<div class="sunk" style="left:577px;top:810px;width:57px;height:21px"><div class="in"></div></div><div class="ddb" style="left:615px;top:812px;width:17px;height:17px"></div><div class="t" style="left:581px;top:814px;letter-spacing:-0.5px">2001</div>
<div class="t" style="left:652px;top:815px">bis:</div>
<div class="sunk" style="left:678px;top:810px;width:57px;height:21px"><div class="in"></div></div><div class="ddb" style="left:716px;top:812px;width:17px;height:17px"></div><div class="t" style="left:682px;top:814px;letter-spacing:-0.5px">2023</div>
<div class="btn" style="left:505px;top:843px;width:80px;height:24px"></div>
<div class="t c" style="left:505px;top:848px;width:80px">Schließen</div>
<div class="btn" style="left:593px;top:843px;width:80px;height:24px"></div>
<div class="t c" style="left:593px;top:848px;width:80px">Hilfe</div>
<!-- right panel -->
<div class="a" style="left:1093px;top:440px;width:271px;height:29px;border:1px solid #000;box-shadow:inset 1px 1px 0 #fff, 1px 1px 0 #fff"></div>
<div class="t" style="left:1101px;top:448px">Bearbeiter<span style="color:#c8a070">:</span></div>
<div class="t" style="left:1162px;top:448px">Penner, Elina</div>
<div class="t" style="left:1093px;top:482px">Vorhandene Jahre:</div>
<div class="sunk" style="left:1093px;top:498px;width:271px;height:299px"><div class="in" style="background:#f0f0f0"></div></div>
<div class="hd" style="left:1095px;top:500px;width:36px"></div>
<div class="hd" style="left:1131px;top:500px;width:71px"></div>
<div class="hd" style="left:1202px;top:500px;width:53px"></div>
<div class="hd" style="left:1255px;top:500px;width:107px;border-right:0;box-shadow:inset 0 -1px 0 #a0a0a0"></div>
<div class="t" style="left:1101px;top:502px">Jahr</div>
<div class="t" style="left:1138px;top:502px">Gespeich...</div>
<div class="t" style="left:1208px;top:502px">Bestand</div>
<div class="t" style="left:1099px;top:517px">2022</div>
<div class="t" style="left:1135px;top:517px">11.07.2024</div>
<div class="t" style="left:1206px;top:517px">WIN</div>
<div class="btn" style="left:1377px;top:469px;width:132px;height:24px"></div>
<div class="t c" style="left:1377px;top:474px;width:132px">Holen...</div>
<div class="btn" style="left:1377px;top:498px;width:132px;height:24px"></div>
<div class="t c" style="left:1377px;top:503px;width:132px">Löschen</div>
<svg class="a" style="left:1510px;top:860px" width="18" height="18" viewBox="0 0 18 18"><g stroke="#fff" stroke-width="1.2" stroke-linecap="round"><path d="M5 15L17 3M10 15L17 8M15 15L17 13"/></g><g stroke="#8a8a8a" stroke-width="1.2" stroke-linecap="round"><path d="M6 16L17.5 4.5M11 16L17.5 9.5M16 16L17.5 14.5"/></g></svg>
</body></html>
